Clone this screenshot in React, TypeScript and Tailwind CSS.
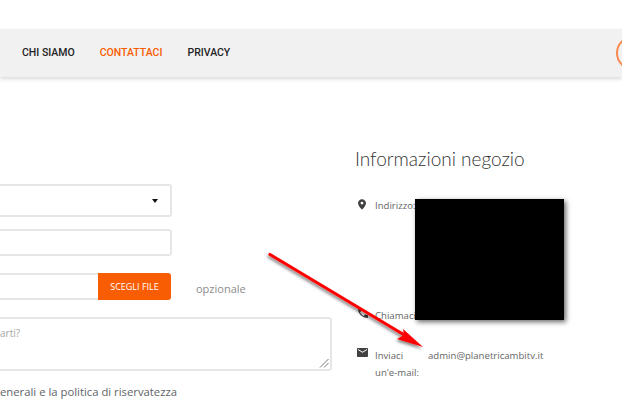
import React from 'react';

const navItems = [
  { label: 'CHI SIAMO', active: false },
  { label: 'CONTATTACI', active: true },
  { label: 'PRIVACY', active: false },
];

function PinIcon() {
  return (
    <svg width="8" height="11" viewBox="0 0 9 12" className="shrink-0 mt-[1px]">
      <path fillRule="evenodd" fill="#414141" d="M4.5 0C2 0 0 2 0 4.4 0 7.6 4.5 12 4.5 12S9 7.6 9 4.4C9 2 7 0 4.5 0zm0 6a1.6 1.6 0 1 1 0-3.2 1.6 1.6 0 0 1 0 3.2z" />
    </svg>
  );
}

function PhoneIcon() {
  return (
    <svg width="10" height="10" viewBox="0 0 12 12" className="shrink-0">
      <path fill="#414141" d="M2.4 5.2c.9 1.8 2.5 3.4 4.4 4.4l1.5-1.5c.2-.2.5-.2.7-.2.7.3 1.5.4 2.4.4.3 0 .6.3.6.6v2.5c0 .3-.3.6-.6.6C5.2 12 0 6.8 0 .6 0 .3.3 0 .6 0h2.5c.3 0 .6.3.6.6 0 .9.1 1.7.4 2.4 0 .2 0 .5-.2.7L2.4 5.2z" />
    </svg>
  );
}

function MailIcon() {
  return (
    <svg width="11" height="9" viewBox="0 0 11 9" className="shrink-0 mt-[1px]">
      <path fill="#414141" d="M1 0h9c.6 0 1 .4 1 1v7c0 .6-.4 1-1 1H1c-.6 0-1-.4-1-1V1c0-.6.4-1 1-1zm0 2l4.5 2.8L10 2V1L5.500 3.800 1 1v1z" />
    </svg>
  );
}

// Red annotation arrow drawn over the page
function Arrow() {
  return (
    <svg width="180" height="115" viewBox="0 0 180 115" className="absolute left-[260px] top-[245px] pointer-events-none">
      <defs>
        <filter id="arrow-shadow" x="-10%" y="-10%" width="120%" height="130%">
          <feDropShadow dx="-1" dy="2" stdDeviation="1.5" floodColor="#000" floodOpacity="0.5" />
        </filter>
      </defs>
      <g filter="url(#arrow-shadow)">
        <line x1="10" y1="9.5" x2="146" y2="91" stroke="#ff0000" strokeWidth="3.2" strokeLinecap="round" />
        <polygon points="163,102 137,94 144,90 143,84" fill="#ff0000" />
      </g>
    </svg>
  );
}

function ResizeHandle() {
  return (
    <svg width="10" height="10" viewBox="0 0 10 10" className="absolute right-[1px] bottom-[1px]">
      <path d="M1 9.5L9.5 1M5 9.5L9.5 5" stroke="#777" strokeWidth="1" fill="none" />
    </svg>
  );
}

export default function App() {
  return (
    <div className="relative w-[622px] h-[413px] overflow-hidden bg-white font-['Open_Sans',sans-serif]">
      <div className="h-[29px]" />

      {/* Nav bar */}
      <div className="h-[48px] bg-[#f1f1f1] shadow-[0_2px_4px_rgba(0,0,0,0.15)] flex items-center pl-[22px] relative overflow-hidden">
        <div className="flex items-center gap-[25px] font-['Roboto',sans-serif] text-[10.5px] font-medium text-[#232323]">
          {navItems.map((item) => (
            <span key={item.label} className={item.active ? 'text-[#f95d03]' : ''}>
              {item.label}
            </span>
          ))}
        </div>
        <div className="ml-auto -mr-[28px] w-[34px] h-[34px] rounded-full border-2 border-[#f98a50]" />
      </div>

      <div className="flex mt-[71px]">
        {/* Form column, runs off the left edge */}
        <div className="w-[372px] shrink-0 -ml-[40px] flex flex-col pt-[36px]">
          <div className="w-[212px] h-[33px] rounded-[3px] border-2 border-[#e6e6e6] flex items-center justify-end pr-[12px]">
            <div className="w-0 h-0 border-x-[3.5px] border-x-transparent border-t-[4px] border-t-[#111]" />
          </div>
          <div className="w-[212px] h-[27px] mt-[12px] rounded-[3px] border-2 border-[#e6e6e6]" />
          <div className="flex items-center mt-[17px]">
            <div className="w-[138px] h-[27px] border-2 border-r-0 border-[#e6e6e6]" />
            <div className="w-[73px] h-[27px] bg-[#f95d03] rounded-r-[3px] flex items-center justify-center text-white text-[9px] font-medium">
              SCEGLI FILE
            </div>
            <span className="ml-[25px] mt-[6px] text-[11px] text-[#8b8b8b]">opzionale</span>
          </div>
          <div className="relative w-[372px] h-[54px] mt-[17px] rounded-[3px] border-2 border-[#e6e6e6] pl-[38px] pt-[5px]">
            <span className="block text-[10px] leading-[18px] text-[#a5a5a5]">arti?</span>
            <ResizeHandle />
          </div>
          <div className="mt-[13px] pl-[40px] whitespace-nowrap text-[11.3px] text-[#5f6368]">
            enerali e la politica di riservatezza
          </div>
        </div>

        {/* Store info */}
        <div className="ml-[23px] flex-1 flex flex-col text-[9.6px] leading-[15px] text-[#666]">
          <h1 className="text-[19px] font-['Lato',sans-serif] font-light text-[#333] leading-[24px] -mt-[1px]">
            Informazioni negozio
          </h1>
          <div className="flex items-start gap-[9px] ml-[3px] mt-[27px]">
            <PinIcon />
            <span>Indirizzo:</span>
          </div>
          <div className="flex items-start gap-[7px] ml-[3px] mt-[95px]">
            <PhoneIcon />
            <span>Chiamaci</span>
          </div>
          <div className="flex items-start gap-[7px] ml-[2px] mt-[24px]">
            <MailIcon />
            <div className="w-[53px] shrink-0 leading-[17px] whitespace-nowrap">
              <div>Inviaci</div>
              <div>un'e-mail:</div>
            </div>
            <span className="leading-[17px] -ml-[7px]">admin@planetricambitv.it</span>
          </div>
        </div>
      </div>

      {/* Redaction block */}
      <div className="absolute left-[415px] top-[199px] w-[149px] h-[121px] bg-black shadow-[2px_2px_5px_rgba(0,0,0,0.6)]" />
      <Arrow />
    </div>
  );
}
